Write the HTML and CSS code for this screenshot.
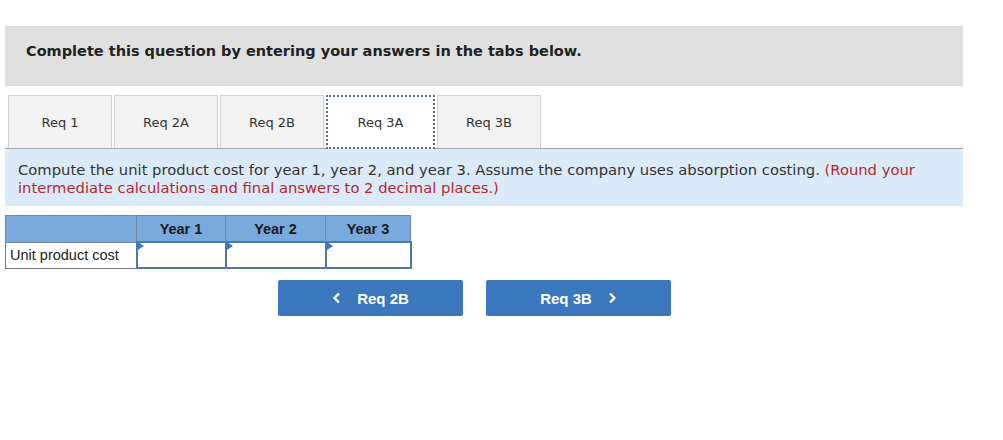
FILE: index.html
```html
<!DOCTYPE html>
<html>
<head>
<meta charset="utf-8">
<link rel="stylesheet" href="styles.css">
</head>
<body>
<div class="page">
  <div class="banner">Complete this question by entering your answers in the tabs below.</div>
  <div class="tabs">
    <div class="tab">Req 1</div>
    <div class="tab">Req 2A</div>
    <div class="tab">Req 2B</div>
    <div class="tab active">Req 3A</div>
    <div class="tab">Req 3B</div>
  </div>
  <div class="prompt">Compute the unit product cost for year 1, year 2, and year 3. Assume the company uses absorption costing. <span class="note">(Round your</span> <span class="note">intermediate calculations and final answers to 2 decimal places.)</span></div>
  <table class="grid">
    <tr class="head">
      <th class="label"></th>
      <th class="c1">Year 1</th>
      <th class="c2">Year 2</th>
      <th class="c3">Year 3</th>
    </tr>
    <tr>
      <td class="label">Unit product cost</td>
      <td class="input"><span class="flag"></span></td>
      <td class="input"><span class="flag"></span></td>
      <td class="input"><span class="flag"></span></td>
    </tr>
  </table>
  <div class="nav">
    <div class="btn prev"><svg class="chev" width="9" height="12" viewBox="0 0 9 12"><polyline points="7,1.5 2.5,6 7,10.5" fill="none" stroke="#fff" stroke-width="2.4"/></svg>Req 2B</div>
    <div class="btn next">Req 3B<svg class="chev" width="9" height="12" viewBox="0 0 9 12"><polyline points="2,1.5 6.5,6 2,10.5" fill="none" stroke="#fff" stroke-width="2.4"/></svg></div>
  </div>
</div>
</body>
</html>
```
FILE: styles.css
```css
html, body { margin: 0; padding: 0; background: #fff; }
.page {
  width: 958px;
  padding: 26px 0 0 5px;
  font-family: "DejaVu Sans", Verdana, sans-serif;
  color: #333;
}
.banner {
  height: 60px;
  background: #e0e0e0;
  box-sizing: border-box;
  padding: 16px 0 0 21px;
  font-size: 14.5px;
  font-weight: bold;
  color: #222;
  line-height: 18px;
}
.tabs {
  display: flex;
  gap: 2px;
  margin-top: 9px;
  padding-left: 3px;
  border-bottom: 1px solid #a6a6a6;
}
.tab {
  width: 104px;
  height: 53px;
  box-sizing: border-box;
  background: #f2f2f2;
  border: 1px solid #d3d3d3;
  border-bottom: none;
  display: flex;
  align-items: center;
  justify-content: center;
  font-size: 13px;
  color: #333;
}
.tab.active {
  width: 109px;
  background: #fff;
  border: 2px dotted #5a6c89;
  margin: 0 0 -1px 0;
  height: 54px;
}
.prompt {
  background: #dbeaf8;
  padding: 12px 13px 8px 13px;
  height: 57px;
  box-sizing: border-box;
  font-size: 14.75px;
  line-height: 18px;
  color: #333;
}
.note { color: #b5272f; }
.grid {
  margin-top: 9px;
  border-collapse: collapse;
  font-family: "Liberation Sans", Arial, sans-serif;
  font-size: 14.5px;
}
.grid th {
  background: #7aa9dd;
  height: 25px;
  padding: 0;
  border: 1px solid #6f8aa8;
  font-weight: bold;
  color: #1a1a1a;
  text-align: center;
}
.grid th.label { width: 130px; }
.grid th.c1 { width: 88px; }
.grid th.c2 { width: 99px; }
.grid th.c3 { width: 84px; }
.grid td {
  height: 24px;
  padding: 0;
}
.grid td.label {
  border: 1px solid #7a7a7a;
  padding-left: 4px;
  color: #222;
}
.grid td.input {
  border: 2px solid #4f78ad;
  position: relative;
  background: #fff;
}
.flag {
  position: absolute;
  left: 0;
  top: -1px;
  width: 0;
  height: 0;
  border-top: 4px solid transparent;
  border-bottom: 4px solid transparent;
  border-left: 6px solid #3a79c4;
}
.nav {
  display: flex;
  gap: 23px;
  margin: 11px 0 0 273px;
}
.btn {
  width: 185px;
  height: 36px;
  background: #3a77bc;
  border-radius: 2px;
  color: #fff;
  font-family: "Liberation Sans", Arial, sans-serif;
  font-weight: bold;
  font-size: 15px;
  display: flex;
  align-items: center;
  justify-content: center;
  gap: 16px;
}
.chev { display: block; }
```
